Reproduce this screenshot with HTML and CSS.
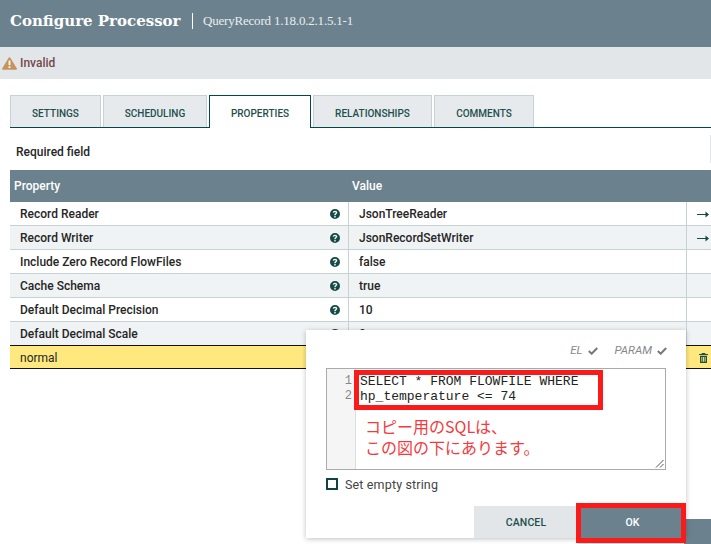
FILE: index.html
```html
<!DOCTYPE html>
<html lang="ja">
<head>
<meta charset="utf-8">
<title>Configure Processor</title>
<link rel="stylesheet" href="styles.css">
</head>
<body>
<div class="page">
  <header class="header">
    <h1 class="title">Configure Processor</h1>
    <span class="subtitle">QueryRecord 1.18.0.2.1.5.1-1</span>
  </header>
  <div class="banner">
    <svg class="warn" width="15" height="13" viewBox="0 0 15 13"><path d="M7.5 0.3c.5 0 .8.3 1 .6l6.2 10.4c.4.8 0 1.5-.9 1.5H1.2c-.9 0-1.3-.7-.9-1.5L6.500.9c.2-.3.5-.6 1-.6z" fill="#c6945a"/><rect x="6.6" y="3.6" width="1.8" height="4.6" fill="#fff"/><rect x="6.6" y="9.3" width="1.8" height="1.8" fill="#fff"/></svg>
    <span class="invalid">Invalid</span>
  </div>
  <nav class="tabs">
    <div class="tab t1">SETTINGS</div>
    <div class="tab t2">SCHEDULING</div>
    <div class="tab t3 active">PROPERTIES</div>
    <div class="tab t4">RELATIONSHIPS</div>
    <div class="tab t5">COMMENTS</div>
  </nav>
  <div class="required"><span>Required field</span><i class="edge"></i></div>
  <div class="table">
    <div class="thead"><div class="c-prop">Property</div><div class="c-val">Value</div></div>
    <div class="row"><div class="c-prop">Record Reader<svg class="help"><use href="#q"/></svg></div><div class="c-val">JsonTreeReader</div><div class="c-act"><svg class="arrow"><use href="#a"/></svg></div></div>
    <div class="row alt"><div class="c-prop">Record Writer<svg class="help"><use href="#q"/></svg></div><div class="c-val">JsonRecordSetWriter</div><div class="c-act"><svg class="arrow"><use href="#a"/></svg></div></div>
    <div class="row"><div class="c-prop">Include Zero Record FlowFiles<svg class="help"><use href="#q"/></svg></div><div class="c-val">false</div><div class="c-act"></div></div>
    <div class="row alt"><div class="c-prop">Cache Schema<svg class="help"><use href="#q"/></svg></div><div class="c-val">true</div><div class="c-act"></div></div>
    <div class="row"><div class="c-prop">Default Decimal Precision<svg class="help"><use href="#q"/></svg></div><div class="c-val">10</div><div class="c-act"></div></div>
    <div class="row alt"><div class="c-prop">Default Decimal Scale<svg class="help"><use href="#q"/></svg></div><div class="c-val">0</div><div class="c-act"></div></div>
    <div class="row selected"><div class="c-prop">normal</div><div class="c-val"></div><div class="c-act"><svg class="trash" width="9" height="10" viewBox="0 0 9 10"><path d="M3 0h3l.6 1H9v1H0V1h2.400zM1 2.700h7V10H1zM2.400 4v4.800h.9V4zM4.050 4v4.800h.9V4zM5.700 4v4.800h.9V4z" fill="#1f4f4b" fill-rule="evenodd"/></svg></div></div>
  </div>
  <div class="under-light"></div>
  <div class="under-dark"></div>

  <section class="dialog">
    <div class="flags"><em>EL</em><svg class="tick"><use href="#c"/></svg><em class="param">PARAM</em><svg class="tick"><use href="#c"/></svg></div>
    <div class="editor">
      <div class="gutter"><div>1</div><div>2</div></div>
      <div class="code">SELECT * FROM FLOWFILE WHERE<br>hp_temperature &lt;= 74</div>
      <div class="sqlbox"></div>
      <p class="note">コピー用のSQLは、<br>この図の下にあります。</p>
      <svg class="grip" width="9" height="9" viewBox="0 0 9 9"><path d="M1 8.500L8.500 1M5 8.500L8.500 5" stroke="#555" stroke-width="1" fill="none"/></svg>
    </div>
    <label class="empty"><span class="box"></span>Set empty string</label>
    <div class="buttons">
      <div class="btn cancel">CANCEL</div>
      <div class="btn ok">OK</div>
    </div>
  </section>
  <div class="okbox"></div>
</div>
<svg width="0" height="0" class="defs">
  <symbol id="q" viewBox="0 0 10 10"><path fill="#164a46" fill-rule="evenodd" d="M5 0a5 5 0 1 1 0 10A5 5 0 0 1 5 0zM4.300 7v1.400h1.400V7zM5 1.700C3.700 1.700 2.900 2.400 2.800 3.600l1.300.2c.1-.6.4-.9.9-.9s.8.3.8.7c0 .4-.3.6-.7.9-.6.4-.8.8-.8 1.700h1.300c0-.5.1-.7.6-1C6.900 4.700 7.300 4.200 7.300 3.500 7.300 2.400 6.400 1.700 5 1.700z"/></symbol>
  <symbol id="a" viewBox="0 0 12 7"><path fill="#164a46" d="M0 2.900h8.500V.6L12 3.500 8.500 6.400V4.100H0z"/></symbol>
  <symbol id="c" viewBox="0 0 10 8"><path fill="none" stroke="#777" stroke-width="2" d="M.8 4l2.900 2.700L9.200 1"/></symbol>
</svg>
</body>
</html>
```
FILE: styles.css
```css
* { box-sizing: border-box; }
html, body { margin: 0; padding: 0; background: #fff; }
body { font-family: Roboto, "Noto Sans CJK JP", sans-serif; color: #262626; }
.page { position: relative; width: 711px; height: 544px; overflow: hidden; }
.defs { position: absolute; }

.header { height: 47px; background: #6b828e; display: flex; align-items: center; padding: 0 0 5px 10px; color: #fff; }
.title { margin: 0; font: bold 15px "DejaVu Serif", serif; letter-spacing: 0; width: 183px; flex: none; border-right: 1px solid #fff; line-height: 16px; white-space: nowrap; }
.subtitle { font: 13px "Liberation Serif", serif; color: #e8edef; margin-left: 10px; letter-spacing: -.2px; }

.banner { height: 32px; background: #e2e6e9; display: flex; align-items: center; padding-left: 2px; }
.warn { display: block; margin-right: 3px; }
.invalid { font-size: 12px; font-weight: 500; color: #75484a; }

.tabs { display: flex; gap: 2px; margin: 16px 0 0 10px; height: 33px; border-bottom: 1px solid #004849; }
.tab { height: 32px; background: #e6eaec; border: 1px solid #c7d2d7; border-bottom: 0; font-size: 10px; font-weight: 500; color: #1f4f4e; display: flex; align-items: center; justify-content: center; padding-top: 3px; }
.t1 { width: 91px; } .t2 { width: 104px; } .t3 { width: 102px; } .t4 { width: 119px; } .t5 { width: 100px; }
.tab.active { background: #fff; border: 1px solid #004849; border-bottom: 0; height: 33px; margin-bottom: -1px; position: relative; }

.required { height: 42px; margin-left: 16px; display: flex; align-items: center; justify-content: space-between; font-size: 12px; font-weight: 500; color: #262626; padding-top: 6px; }
.edge { width: 1px; height: 28px; background: #e0e4e6; margin-top: -6px; }

.table { margin-left: 10px; font-size: 12px; font-weight: 500; }
.thead { height: 32px; background: #6b828e; color: #fff; display: flex; align-items: center; }
.thead .c-prop { width: 342px; padding-left: 4px; }
.row { height: 24px; display: flex; border-bottom: 1px solid #c7d2d7; background: #fff; }
.row.alt { background: #f0f3f4; }
.row > div { display: flex; align-items: center; height: 23px; padding-top: 1px; }
.row .c-prop { width: 339px; padding: 1px 8px 0 10px; justify-content: space-between; border-right: 1px solid #c7d2d7; }
.row .c-val { width: 337px; padding-left: 10px; }
.row .c-act { width: 25px; border-left: 1px solid #c7d2d7; justify-content: flex-end; padding-right: 2px; }
.help { width: 10px; height: 10px; display: block; }
.arrow { width: 12px; height: 7px; display: block; }
.row.selected { background: #ffe97f; border-top: 1px solid #111; border-bottom: 1px solid #111; margin-top: -1px; font-weight: 400; }
.row.selected > div { height: 22px; border-color: transparent; }
.row.selected .c-act { justify-content: flex-start; padding-left: 12px; }
.trash { display: block; }

.under-light { position: absolute; left: 578px; top: 538px; width: 106px; height: 6px; background: #e2e6e9; }
.under-dark { position: absolute; left: 684px; top: 519px; width: 27px; height: 25px; background: #6b828e; }

.dialog { position: absolute; left: 306px; top: 330px; width: 380px; height: 208px; background: #fff; box-shadow: 0 1px 5px rgba(0,0,0,.25); display: flex; flex-direction: column; padding-top: 14px; }
.flags { height: 24px; display: flex; justify-content: flex-end; align-items: flex-start; padding-right: 19px; font-size: 11.5px; color: #888; }
.flags em { font-style: italic; line-height: 13px; }
.flags .param { margin-left: 17px; }
.tick { width: 10px; height: 8px; margin: 3px 0 0 5px; display: block; }
.editor { position: relative; margin-left: 20px; width: 340px; height: 102px; border: 1px solid #aaa; display: flex; }
.gutter { width: 29px; flex: none; background: #f5f5f5; border-right: 1px solid #ddd; font: 12px/15px "Liberation Mono", monospace; color: #888; text-align: right; padding: 5px 3px 0 0; }
.code { font: 13px/15px "Liberation Mono", monospace; color: #222; padding: 5px 0 0 4px; white-space: nowrap; }
.sqlbox { position: absolute; left: 27px; top: 1px; width: 249px; height: 40px; border: 5px solid #fb1a1a; }
.note { position: absolute; left: 38px; top: 47px; margin: 0; font: 16px/21px "Noto Sans CJK JP", sans-serif; color: #f5393c; }
.grip { position: absolute; right: 1px; bottom: 1px; }
.empty { display: flex; align-items: center; margin: 7px 0 0 20px; height: 14px; font-size: 12.5px; color: #444; letter-spacing: .15px; }
.box { width: 12px; height: 12px; border: 2px solid #0f4543; margin-right: 7px; }
.buttons { display: flex; justify-content: flex-end; margin-top: auto; gap: 1px; }
.btn { height: 32px; display: flex; align-items: center; justify-content: center; font-size: 10.5px; font-weight: 500; letter-spacing: .1px; }
.cancel { width: 104px; background: #e2e6e9; color: #1f4f4e; }
.ok { width: 107px; background: #6b828e; color: #fff; }
.okbox { position: absolute; left: 576px; top: 503px; width: 110px; height: 40px; border: 5px solid #fb1a1a; }
```
